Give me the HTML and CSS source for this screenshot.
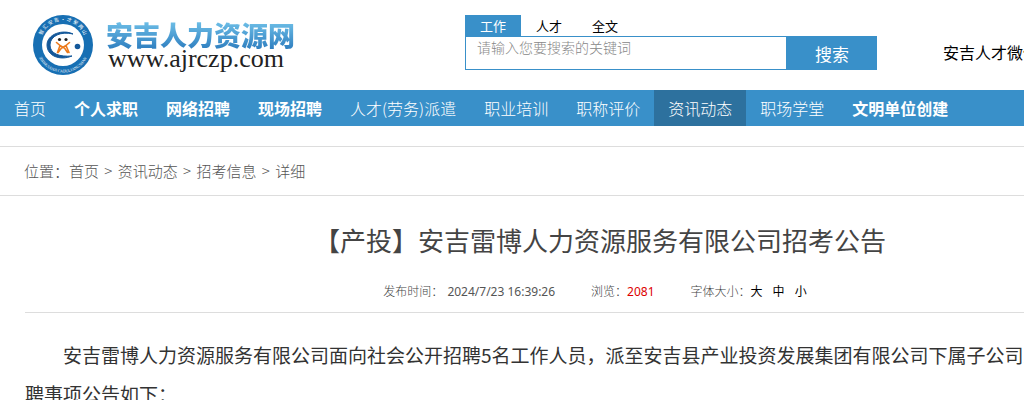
FILE: index.html
```html
<!DOCTYPE html>
<html lang="zh-CN">
<head>
    <meta charset="UTF-8">
    <meta name="viewport" content="width=device-width, initial-scale=1.0">
    <title>【产投】安吉雷博人力资源服务有限公司招考公告</title>
    <link rel="stylesheet" href="styles.css">
</head>
<body>
    <header class="header">
        <a class="logo" href="#">
            <svg class="logo-seal" viewBox="0 0 60 60" aria-hidden="true">
                <defs>
                    <path id="arc-top" d="M8.5 35 A22.5 22.5 0 1 1 51.5 35"/>
                    <path id="arc-bottom" d="M3.5 31 A26.5 26.5 0 0 0 56.5 31"/>
                </defs>
                <circle cx="30" cy="30" r="30" fill="#176fb3"/>
                <circle cx="30" cy="30" r="21" fill="#fff"/>
                <text class="seal-cn"><textPath href="#arc-top" startOffset="50%">智 汇 安 吉 · 才 聚 两 山</textPath></text>
                <text class="seal-en"><textPath href="#arc-bottom" startOffset="50%">ZHIHUIANJI CAIJULIANGSHAN</textPath></text>
                <path d="M40 19 C30 14 14 19 14 30 C14 41 27 46 39 41 C27 42 17 39 17 30 C17 21 28 16 40 19Z" fill="#14589a" stroke="#14589a" stroke-width="1"/>
                <circle cx="44.500" cy="31.500" r="2.800" fill="#14589a"/>
                <circle cx="26.500" cy="24.500" r="1.600" fill="#222"/>
                <circle cx="33" cy="24.500" r="1.600" fill="#222"/>
                <path d="M23.500 27.500 L27 30.500 L24.500 37.500 M27 30.500 L31.500 33 L34.500 37.500 M36.500 27.500 L33 30.500 L36 37.500 M33 30.500 L28.500 33 L25 37.500" fill="none" stroke="#ec7a1c" stroke-width="1.600" stroke-linecap="round"/>
            </svg>
            <span class="logo-text">
                <span class="logo-name">安吉人力资源网</span>
                <span class="logo-url">www.ajrczp.com</span>
            </span>
        </a>
        <form class="search">
            <div class="search-tabs">
                <button type="button" class="search-tab active">工作</button>
                <button type="button" class="search-tab">人才</button>
                <button type="button" class="search-tab">全文</button>
            </div>
            <div class="search-row">
                <input class="search-input" type="text" placeholder="请输入您要搜索的关键词" aria-label="搜索关键词">
                <button type="submit" class="search-button">搜索</button>
            </div>
        </form>
        <a class="wechat" href="#">安吉人才微信</a>
    </header>

    <nav class="nav">
        <a href="#">首页</a>
        <a href="#" class="strong">个人求职</a>
        <a href="#" class="strong">网络招聘</a>
        <a href="#" class="strong">现场招聘</a>
        <a href="#">人才(劳务)派遣</a>
        <a href="#">职业培训</a>
        <a href="#">职称评价</a>
        <a href="#" class="current">资讯动态</a>
        <a href="#">职场学堂</a>
        <a href="#" class="strong">文明单位创建</a>
    </nav>

    <div class="breadcrumb">
        位置：<a href="#">首页</a> <span class="sep">&gt;</span> <a href="#">资讯动态</a> <span class="sep">&gt;</span> <a href="#">招考信息</a> <span class="sep">&gt;</span> <span>详细</span>
    </div>

    <main class="article">
        <h1>【产投】安吉雷博人力资源服务有限公司招考公告</h1>
        <div class="meta">
            <div class="meta-item">发布时间：<span class="date">2024/7/23 16:39:26</span></div>
            <div class="meta-item">浏览：<span class="views">2081</span></div>
            <div class="meta-item sizes">字体大小：<button type="button">大</button><button type="button">中</button><button type="button">小</button></div>
        </div>
        <div class="content">
            <p>安吉雷博人力资源服务有限公司面向社会公开招聘5名工作人员，派至安吉县产业投资发展集团有限公司下属子公司工作，现将招<br>聘事项公告如下：</p>
        </div>
    </main>
</body>
</html>
```
FILE: styles.css
```css
* {
    box-sizing: border-box;
}
html {
    overflow: hidden;
}
body {
    min-width: 1200px;
    margin: 0;
    background-color: #fff;
    color: #333;
    font-family: "Noto Sans CJK SC", sans-serif;
    font-weight: 300;
}
a {
    color: inherit;
    text-decoration: none;
}
button {
    padding: 0;
    border: none;
    background: none;
    color: #000;
    font-family: inherit;
    font-weight: inherit;
    cursor: pointer;
}

/* header */
.header {
    display: flex;
    align-items: flex-start;
    height: 90px;
    padding: 15px 33px 0;
}
.logo {
    display: flex;
    gap: 13px;
    width: 432px;
}
.logo-seal {
    width: 60px;
    height: 60px;
}
.seal-cn,
.seal-en {
    fill: #fff;
    text-anchor: middle;
}
.seal-cn {
    font-size: 5px;
    font-weight: 400;
}
.seal-en {
    font-family: "Liberation Serif", serif;
    font-size: 4px;
}
.logo-text {
    display: flex;
    flex-direction: column;
    padding-top: 6px;
}
.logo-name {
    background: linear-gradient(#6fc0e8, #2f7fc0);
    background-clip: text;
    color: transparent;
    font-size: 27px;
    font-weight: 900;
    line-height: 28px;
}
.logo-url {
    color: #222;
    padding-left: 2px;
    font-family: "Liberation Serif", serif;
    font-size: 26px;
    font-weight: 400;
    line-height: 20px;
}
.search {
    width: 412px;
}
.search-tabs {
    display: flex;
}
.search-tab {
    width: 56px;
    height: 21px;
    font-size: 13px;
    font-weight: 400;
    line-height: 20px;
}
.search-tab.active {
    background-color: #3990c9;
    color: #fff;
}
.search-row {
    display: flex;
}
.search-input {
    flex: 1;
    min-width: 0;
    height: 34px;
    padding: 0 11px 12px;
    border: 1px solid #3990c9;
    font-family: inherit;
    font-size: 14px;
    font-weight: 300;
}
.search-input::placeholder {
    color: #888;
}
.search-button {
    width: 90px;
    height: 34px;
    background-color: #3990c9;
    color: #fff;
    font-size: 17px;
    font-weight: 400;
}
.wechat {
    margin-left: 66px;
    padding-top: 25px;
    color: #000;
    font-size: 16px;
    font-weight: 400;
    line-height: 24px;
}

/* main menu */
.nav {
    display: flex;
    background-color: #3990c9;
}
.nav a {
    padding: 0 14px;
    color: #fff;
    font-size: 16px;
    line-height: 36px;
}
.nav .strong {
    font-weight: 700;
}
.nav .current {
    background-color: #2d719e;
}

.breadcrumb {
    margin-top: 20px;
    padding: 0 24px;
    border-top: 1px solid #ddd;
    border-bottom: 1px solid #ddd;
    color: #555;
    font-size: 15px;
    line-height: 48px;
}
.breadcrumb .sep {
    margin: 0 2px;
}

/* article */
.article {
    padding: 0 25px;
}
.article h1 {
    margin: 23px 0 0;
    color: #444;
    font-size: 26px;
    font-weight: 400;
    line-height: 42px;
    text-align: center;
}
.meta {
    display: flex;
    justify-content: center;
    gap: 36px;
    padding: 20px 0 10px;
    border-bottom: 1px solid #ddd;
    color: #444;
    font-size: 12px;
    line-height: 20px;
}
.date,
.views {
    font-family: "Noto Sans", sans-serif;
    font-weight: 400;
}
.date {
    margin-left: 4px;
    color: #555;
}
.views {
    color: #d00;
}
.sizes button {
    margin-right: 10px;
    font-size: 12px;
    font-weight: 400;
}
.content {
    padding-top: 22px;
    font-size: 19px;
    font-weight: 400;
    line-height: 39px;
}
.content p {
    margin: 0;
    text-indent: 2em;
}
```
